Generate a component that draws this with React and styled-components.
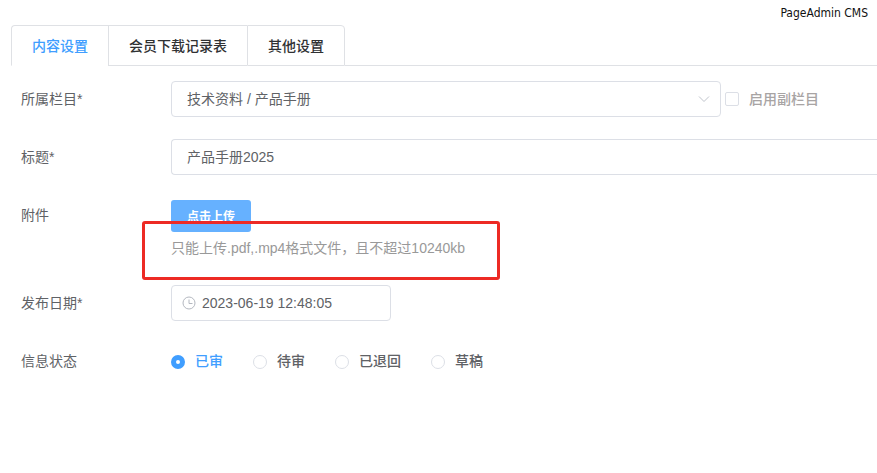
import React, { useState } from 'react'
import styled, { createGlobalStyle } from 'styled-components'

const tabs = ['内容设置', '会员下载记录表', '其他设置']
const states = ['已审', '待审', '已退回', '草稿']

function App() {
  const [tab, setTab] = useState(tabs[0])
  const [state, setState] = useState(states[0])
  const [title, setTitle] = useState('产品手册2025')
  const [date, setDate] = useState('2023-06-19 12:48:05')

  return (
    <Page>
      <GlobalStyle />
      <Brand>PageAdmin CMS</Brand>
      <TabBar role="tablist">
        {tabs.map((name) => (
          <Tab
            key={name}
            type="button"
            role="tab"
            aria-selected={name === tab}
            $active={name === tab}
            onClick={() => setTab(name)}
          >
            {name}
          </Tab>
        ))}
        <TabLine />
      </TabBar>
      <Form>
        <Row>
          <Label htmlFor="column">所属栏目*</Label>
          <Content>
            <SelectWrap>
              <Select id="column">
                <option>技术资料 / 产品手册</option>
              </Select>
              <Arrow viewBox="0 0 14 14">
                <path d="M2 4.5l5 5 5-5" />
              </Arrow>
            </SelectWrap>
            <CheckLabel>
              <Checkbox type="checkbox" />
              启用副栏目
            </CheckLabel>
          </Content>
        </Row>
        <Row>
          <Label htmlFor="title">标题*</Label>
          <Content>
            <TitleInput id="title" value={title} onChange={(e) => setTitle(e.target.value)} />
          </Content>
        </Row>
        <Row>
          <Label as="span">附件</Label>
          <Upload>
            <UploadButton type="button">点击上传</UploadButton>
            <Tip>
              只能上传.pdf,.mp4格式文件，且不超过10240kb
              <Highlight />
            </Tip>
          </Upload>
        </Row>
        <Row>
          <Label htmlFor="date">发布日期*</Label>
          <Content>
            <DateWrap>
              <Clock viewBox="0 0 14 14">
                <circle cx="7" cy="7" r="6" />
                <path d="M7 3.5v4h3.5" />
              </Clock>
              <DateInput id="date" value={date} onChange={(e) => setDate(e.target.value)} />
            </DateWrap>
          </Content>
        </Row>
        <Row>
          <Label as="span" id="state">信息状态</Label>
          <RadioGroup role="radiogroup" aria-labelledby="state">
            {states.map((name) => (
              <RadioLabel key={name} $checked={name === state}>
                <Radio
                  type="radio"
                  name="state"
                  checked={name === state}
                  onChange={() => setState(name)}
                />
                {name}
              </RadioLabel>
            ))}
          </RadioGroup>
        </Row>
      </Form>
    </Page>
  )
}

export default App

const GlobalStyle = createGlobalStyle`
  * {
    box-sizing: border-box;
  }
  body {
    margin: 0;
    background: #fff;
  }
  body, button, input, select {
    font-family: "Liberation Sans", "Noto Sans CJK SC", sans-serif;
    font-size: 14px;
    color: #606266;
  }
`
const Page = styled.div`
  padding-left: 11px;
  overflow: hidden;
`
const Brand = styled.header`
  height: 25px;
  padding-right: 9px;
  font: 12px/26px "DejaVu Sans Condensed", sans-serif;
  color: #111;
  text-align: right;
`
const TabBar = styled.div`
  display: flex;
  height: 41px;
`
const Tab = styled.button`
  padding: 0 20px 2px;
  border: 1px solid #dfe1e5;
  border-right-width: 0;
  border-bottom-color: ${(p) => (p.$active ? '#fff' : '#dfe1e5')};
  background: #fff;
  font-weight: 500;
  color: ${(p) => (p.$active ? '#409eff' : '#303133')};
  cursor: pointer;

  &:first-child {
    border-top-left-radius: 4px;
  }
  &:nth-last-child(2) {
    border-right-width: 1px;
    border-top-right-radius: 4px;
  }
`
const TabLine = styled.div`
  flex: 1;
  border-bottom: 1px solid #dfe1e5;
`
const Form = styled.form`
  display: flex;
  flex-direction: column;
  gap: 22px;
  padding: 15px 0 0 10px;
`
const Row = styled.div`
  display: flex;
  align-items: flex-start;
`
const Label = styled.label`
  flex: none;
  width: 150px;
  line-height: 36px;
`
const Content = styled.div`
  display: flex;
  flex: 1;
  align-items: center;
  min-height: 36px;
`
const Input = styled.input`
  width: 100%;
  height: 36px;
  padding: 0 15px;
  border: 1px solid #dcdfe6;
  border-radius: 4px;
  background: #fff;
  outline: none;
`
const TitleInput = styled(Input)`
  padding-bottom: 2px;
  border-right: 0;
  border-radius: 4px 0 0 4px;
`
const SelectWrap = styled.div`
  position: relative;
  width: 550px;
`
const Select = styled(Input).attrs({ as: 'select' })`
  display: block;
  appearance: none;
`
const Arrow = styled.svg`
  position: absolute;
  top: 11px;
  right: 10px;
  width: 14px;
  height: 14px;
  fill: none;
  stroke: #c0c4cc;
  pointer-events: none;
`
const CheckLabel = styled.label`
  display: flex;
  align-items: center;
  gap: 10px;
  margin-left: 4px;
  font-weight: 500;
  line-height: 36px;
  color: #a8a4a4;
`
const Checkbox = styled.input`
  appearance: none;
  width: 14px;
  height: 14px;
  margin: 0;
  border: 1px solid #dcdfe6;
  border-radius: 2px;

  &:checked {
    background: #409eff;
  }
`
const Upload = styled.div`
  display: flex;
  flex-direction: column;
  align-items: flex-start;
  padding: 3px 0 0;
`
const UploadButton = styled.button`
  height: 32px;
  padding: 0 16px 2px;
  border: 0;
  border-radius: 3px;
  background: #66b1ff;
  font-size: 12px;
  font-weight: 700;
  color: #fff;
`
const Tip = styled.div`
  position: relative;
  height: 31px;
  line-height: 32px;
  color: #999;
`
/* red marker frame drawn over the button and the tip */
const Highlight = styled.div`
  position: absolute;
  top: -11px;
  right: -35px;
  left: -29px;
  height: 59px;
  border: 3px solid #ed2a24;
  border-radius: 3px;
  pointer-events: none;
`
const DateWrap = styled.div`
  position: relative;
  width: 220px;
`
const DateInput = styled(Input)`
  display: block;
  padding-left: 30px;
`
const Clock = styled.svg`
  position: absolute;
  top: 11px;
  left: 11px;
  width: 14px;
  height: 14px;
  fill: none;
  stroke: #b4b8c0;
`
const RadioGroup = styled(Content)`
  gap: 30px;
`
const RadioLabel = styled.label`
  display: flex;
  align-items: center;
  gap: 10px;
  font-weight: 500;
  line-height: 36px;
  color: ${(p) => (p.$checked ? '#409eff' : '#606266')};
`
const Radio = styled.input`
  appearance: none;
  width: 14px;
  height: 14px;
  margin: 2px 0 0;
  border: 1px solid #dcdfe6;
  border-radius: 50%;

  &:checked {
    border: 5px solid #409eff;
  }
`
